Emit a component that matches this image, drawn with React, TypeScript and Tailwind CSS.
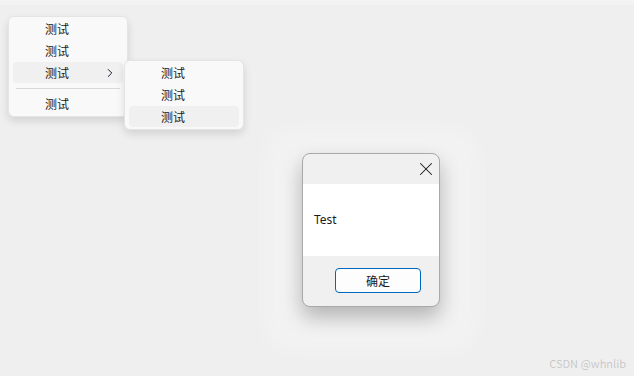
import { ChevronRight, X } from "lucide-react";

const cjk = "font-['Microsoft_YaHei','Noto_Sans_CJK_SC',sans-serif]";

interface MenuItemProps {
  label: string;
  active?: boolean;
  sub?: boolean;
}

const MenuItem = ({ label, active, sub }: MenuItemProps) => (
  <div
    className={`mt-px flex h-[21px] items-center rounded-[4px] pl-[32px] pr-[6px] text-[12px] leading-none text-[#1a1a1a] ${
      active ? "bg-[#f0f0f0]" : ""
    }`}
  >
    <span className="flex-1">{label}</span>
    {sub && <ChevronRight size={14} strokeWidth={1.7} className="text-[#15152e]" />}
  </div>
);

const ContextMenu = () => (
  <div
    className={`absolute left-[8px] top-[16px] w-[120px] rounded-[6px] border border-[#e4e4e4] bg-[#f9f9f9] px-[4px] pb-[2px] shadow-[0_4px_8px_rgba(0,0,0,0.12)] ${cjk}`}
  >
    <MenuItem label="测试" />
    <MenuItem label="测试" />
    <MenuItem label="测试" active sub />
    <div className="mx-[3px] mb-[4px] mt-[5px] h-px bg-[#d9d9d9]" />
    <MenuItem label="测试" />
  </div>
);

const SubMenu = () => (
  <div
    className={`absolute left-[124px] top-[60px] w-[120px] rounded-[6px] border border-[#e4e4e4] bg-[#f9f9f9] px-[4px] pb-[2px] shadow-[0_4px_8px_rgba(0,0,0,0.12)] ${cjk}`}
  >
    <MenuItem label="测试" />
    <MenuItem label="测试" />
    <MenuItem label="测试" active />
  </div>
);

const Dialog = () => (
  <>
    <div className="absolute left-[266px] top-[128px] h-[224px] w-[212px] rounded-[24px] bg-[#f2f2f2] blur-[8px]" />
    <div className="absolute left-[302px] top-[153px] flex h-[154px] w-[138px] flex-col overflow-hidden rounded-[8px] border border-[#a9a9a9] bg-[#f0f0f0] shadow-[0_10px_20px_rgba(0,0,0,0.26)]">
      <div className="flex h-[30px] shrink-0 items-center justify-end pr-[2px]">
        <X size={22} strokeWidth={1.1} className="text-[#1a1a1a]" />
      </div>
      <div className="flex h-[72px] shrink-0 items-center bg-white pl-[11px] font-['Segoe_UI','Noto_Sans',sans-serif] text-[12px] text-[#1a1a1a]">
        Test
      </div>
      <div className="flex flex-1 items-start justify-center pl-[14px] pt-[12px]">
        <button
          className={`flex h-[25px] w-[86px] items-center justify-center rounded-[4px] border border-[#0067c0] bg-[#fdfdfd] text-[12px] text-[#1a1a1a] ${cjk}`}
        >
          确定
        </button>
      </div>
    </div>
  </>
);

export default function App() {
  return (
    <div className="relative h-[376px] w-[634px] overflow-hidden bg-[#efefef]">
      <div className="h-[5px] bg-[#f3f3f3]" />
      <Dialog />
      <ContextMenu />
      <SubMenu />
      <div className="absolute bottom-[5px] right-[8px] font-['Microsoft_YaHei','Noto_Sans_CJK_SC',sans-serif] text-[11px] text-[#c6c6c6] [text-shadow:0_0_1px_#fff]">
        CSDN @whnlib
      </div>
    </div>
  );
}
